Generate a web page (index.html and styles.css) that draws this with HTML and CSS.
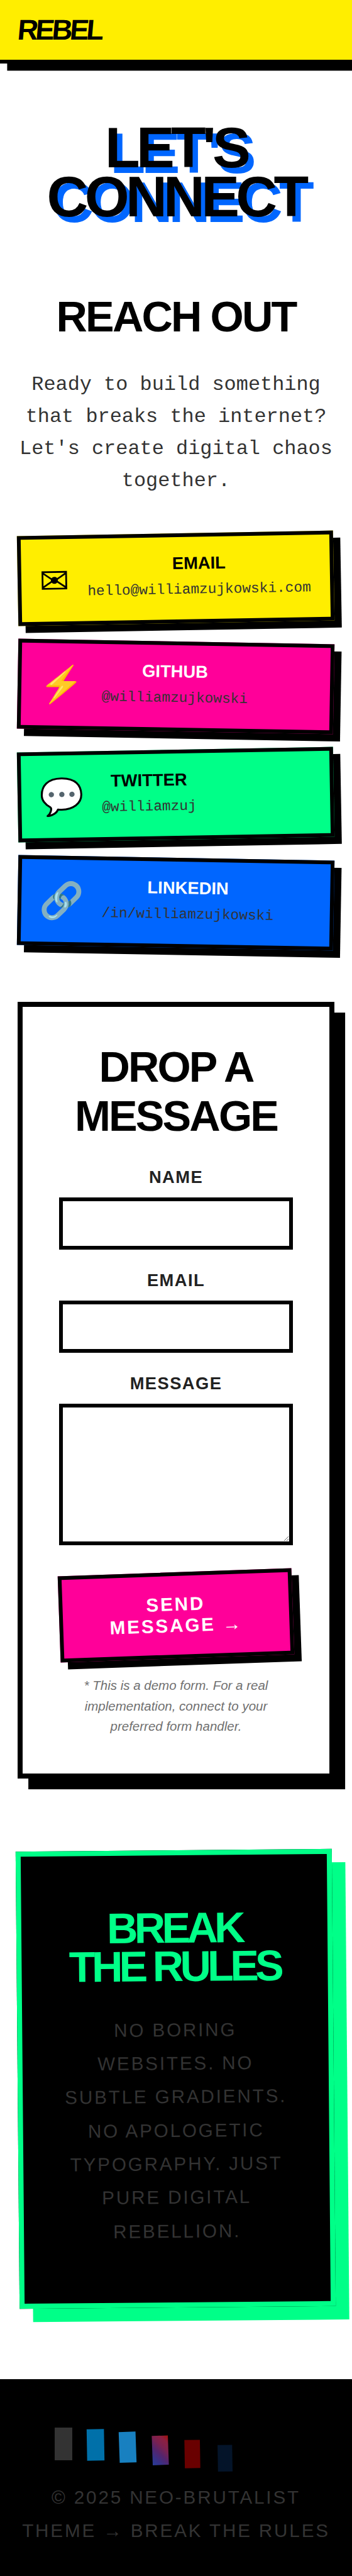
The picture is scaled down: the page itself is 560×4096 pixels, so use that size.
FILE: index.html
```html
<!DOCTYPE html>
<html lang="en">
<head>
<meta charset="utf-8">
<title>Rebel - Let's Connect</title>
<link rel="stylesheet" href="styles.css">
</head>
<body>
<header class="header"><div class="logo">REBEL</div></header>
<main class="main">
  <h1 class="hero">LET'S<br>CONNECT</h1>
  <section class="reach">
    <h2 class="heading">REACH OUT</h2>
    <p class="lead">Ready to build something that breaks the internet? Let's create digital chaos together.</p>
    <div class="cards">
      <a class="card card-yellow"><span class="icon">✉</span><span class="info"><strong class="name">EMAIL</strong><span class="handle">hello@williamzujkowski.com</span></span></a>
      <a class="card card-pink"><span class="icon">⚡</span><span class="info"><strong class="name">GITHUB</strong><span class="handle">@williamzujkowski</span></span></a>
      <a class="card card-green"><span class="icon">💬</span><span class="info"><strong class="name">TWITTER</strong><span class="handle">@williamzuj</span></span></a>
      <a class="card card-blue"><span class="icon">🔗</span><span class="info"><strong class="name">LINKEDIN</strong><span class="handle">/in/williamzujkowski</span></span></a>
    </div>
  </section>
  <form class="form">
    <h2 class="heading">DROP A MESSAGE</h2>
    <div class="field"><label class="label" for="name">NAME</label><input class="input" id="name" type="text"></div>
    <div class="field"><label class="label" for="email">EMAIL</label><input class="input" id="email" type="email"></div>
    <div class="field"><label class="label" for="message">MESSAGE</label><textarea class="input area" id="message"></textarea></div>
    <button class="send" type="button">SEND MESSAGE →</button>
    <p class="note">* This is a demo form. For a real implementation, connect to your preferred form handler.</p>
  </form>
  <section class="rules">
    <h2 class="rules-title">BREAK<br>THE RULES</h2>
    <p class="rules-text">NO BORING WEBSITES. NO SUBTLE GRADIENTS. NO APOLOGETIC TYPOGRAPHY. JUST PURE DIGITAL REBELLION.</p>
  </section>
</main>
<footer class="footer">
  <div class="swatches">
    <span class="swatch swatch-1"></span>
    <span class="swatch swatch-2"></span>
    <span class="swatch swatch-3"></span>
    <span class="swatch swatch-4"></span>
    <span class="swatch swatch-5"></span>
    <span class="swatch swatch-6"></span>
  </div>
  <p class="copyright">© 2025 NEO-BRUTALIST THEME → BREAK THE RULES</p>
</footer>
</body>
</html>
```

FILE: styles.css
```css
* { box-sizing: border-box; margin: 0; padding: 0; }

html { font-size: 14.2494px; overflow: hidden; }

body {
  width: 560px;
  height: 4096px;
  overflow: hidden;
  display: flex;
  flex-direction: column;
  background: #fff;
  color: #000;
  font-family: "Liberation Sans", Arial, sans-serif;
  text-align: center;
}

.header {
  height: 7.1rem;
  flex: none;
  padding: 1.51rem 2rem;
  background: #ffee00;
  border-bottom: 6px solid #000;
  box-shadow: 0.8rem 0.8rem 0 #000;
  text-align: left;
}

.logo {
  display: inline-block;
  font-size: 3.2rem;
  font-weight: 900;
  letter-spacing: -0.3rem;
  transform: skewX(-5deg);
}

.main { padding: 6.68rem 2rem 0; flex: none; }

.hero {
  font-size: 6.4rem;
  font-weight: 900;
  line-height: 0.85;
  letter-spacing: -0.4rem;
  text-shadow: 0.6rem 0.6rem 0 #0066ff;
}

.reach { padding-top: 7.94rem; }

.heading {
  font-size: 4.8rem;
  font-weight: 900;
  letter-spacing: -0.2rem;
  margin-bottom: 3.04rem;
}

.lead {
  font-family: "Liberation Mono", "Courier New", monospace;
  font-size: 2.24rem;
  line-height: 1.6;
  color: #333;
}

.cards { display: flex; flex-direction: column; gap: 2rem; margin-top: 4.07rem; }

.card {
  display: flex;
  align-items: center;
  gap: 2rem;
  height: 10.07rem;
  padding: 0 2rem;
  border: 6px solid #000;
  box-shadow: 0.8rem 0.8rem 0 #000;
  transform: rotate(-1deg);
}

.card:nth-child(even) { transform: rotate(1deg); color: #fff; }
.card-yellow { background: #ffee00; }
.card-pink { background: #ff0099; }
.card-green { background: #00ff88; }
.card-blue { background: #0066ff; }

.icon { font-size: 4rem; }
.info { display: flex; flex-direction: column; gap: 0.57rem; padding-bottom: 0.24rem; }
.name { font-size: 1.92rem; font-weight: 900; }

.handle {
  font-family: "Liberation Mono", "Courier New", monospace;
  font-size: 1.6rem;
  line-height: 1.6;
  color: #333;
}

.form {
  height: 86.72rem;
  margin-top: 5.99rem;
  padding: 3.92rem 4.04rem;
  background: #fff;
  border: 8px solid #000;
  box-shadow: 1.2rem 1.2rem 0 #000;
}

.field { display: flex; flex-direction: column; margin-bottom: 2.33rem; }

.label {
  font-size: 1.92rem;
  font-weight: 900;
  letter-spacing: 0.1rem;
  color: #222;
  margin-bottom: 1.13rem;
}

.input {
  display: block;
  width: 100%;
  height: 5.8rem;
  border: 6px solid #000;
  border-radius: 0;
  background: #fff;
  outline: 0;
}

.area { height: 15.78rem; }

.send {
  display: block;
  width: 100%;
  height: 9.58rem;
  margin-top: 3.04rem;
  padding: 0 4rem;
  border: 6px solid #000;
  background: #ff0099;
  color: #fff;
  font: 900 2.08rem "Liberation Sans", Arial, sans-serif;
  letter-spacing: 0.2rem;
  box-shadow: 0.8rem 0.8rem 0 #000;
  transform: rotate(-2deg);
}

.note {
  margin-top: 1.91rem;
  font-size: 1.44rem;
  font-style: italic;
  line-height: 1.6;
  color: #707070;
}

.rules {
  height: 51.05rem;
  margin-top: 8rem;
  padding: 5.96rem 4rem;
  background: #000;
  border: 8px solid #00ff88;
  box-shadow: 1.5rem 1.5rem 0 #00ff88;
  transform: rotate(-0.5deg);
}

.rules-title {
  font-size: 4.8rem;
  font-weight: 900;
  line-height: 0.9;
  letter-spacing: -0.4rem;
  color: #00ff88;
}

.rules-text {
  margin-top: 3rem;
  font-size: 2.08rem;
  line-height: 1.8;
  letter-spacing: 0.2rem;
  color: #333;
}

.footer {
  flex: 1;
  margin-top: 7.96rem;
  padding: 5.4rem 2rem 0;
  background: #000;
  color: #333;
}

.swatches { display: flex; gap: 1.606rem; padding-left: 4.09rem; }
.swatch { width: 2rem; height: 3.6rem; }
.swatch-1 { background: #333; }
.swatch-2 { background: #0070a9; transform: translateY(0.14rem) rotate(-1deg) scale(0.985); }
.swatch-3 { background: #1880c0; transform: translateY(0.4rem) rotate(-2deg) scale(0.957); }
.swatch-4 { background: linear-gradient(45deg, #283c96 0%, #35328a 18%, #52256e 40%, #7a2150 62%, #8b2042 82%, #9f1414 96%); transform: translateY(0.75rem) rotate(-2deg) scale(0.915); }
.swatch-5 { background: #690000; transform: translateY(1.16rem) rotate(-1deg) scale(0.88); }
.swatch-6 { background: #041429; transform: translateY(1.63rem) rotate(-1deg) scale(0.83); }

.copyright {
  margin-top: 2.38rem;
  font-size: 2.08rem;
  line-height: 3.68rem;
  letter-spacing: 0.2rem;
}
```
